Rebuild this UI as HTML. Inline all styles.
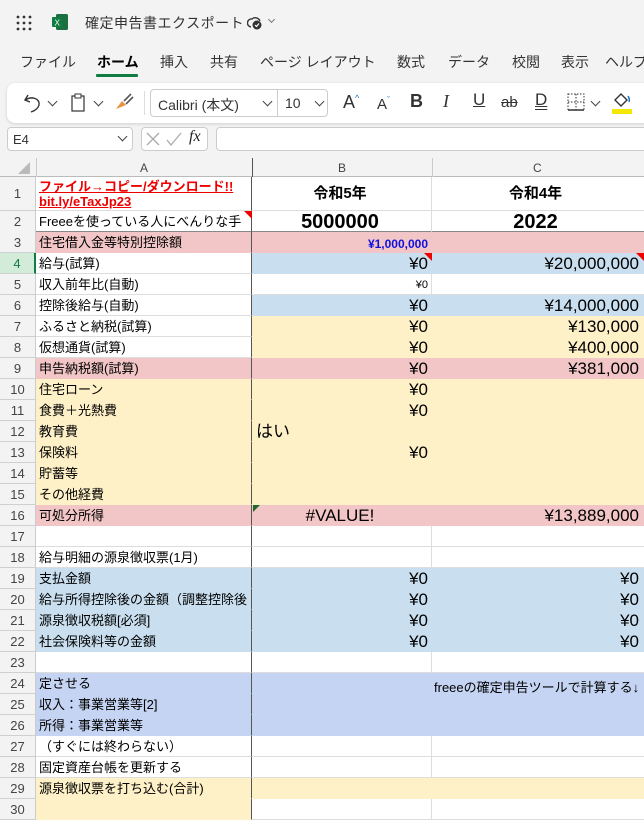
<!DOCTYPE html>
<html><head><meta charset="utf-8">
<style>
*{box-sizing:border-box;margin:0;padding:0}
body{width:644px;height:818px;overflow:hidden;background:#fff;font-family:"Liberation Sans","Noto Sans CJK JP",sans-serif;position:relative;color:#000}
.top{position:absolute;left:0;top:0;width:644px;height:158px;background:#f3f3f3}
.abs{position:absolute;white-space:nowrap}
.tab{position:absolute;top:52px;font-size:14px;color:#333;white-space:nowrap}
.card{position:absolute;left:7px;top:83px;width:650px;height:40px;background:#fff;border-radius:8px;box-shadow:0 1px 3px rgba(0,0,0,.15)}
.r{position:absolute;left:0;width:644px;height:21px}
.r div{position:absolute;top:0;height:100%;white-space:nowrap;overflow:hidden}
.n{left:0;width:36px;background:#f3f3f3;border-right:1px solid #ccc;border-bottom:1px solid #d0d0d0;text-align:center;font-size:13px;color:#444;line-height:21px}
.a{left:36px;width:216px;border-right:1px solid #555;border-bottom:1px solid #ddd;font-size:13px;line-height:22px;padding-left:3px}
.b{left:252px;width:180px;border-right:1px solid #ddd;border-bottom:1px solid #ddd;font-size:17px;line-height:22px;text-align:right;padding-right:3px}
.c{left:432px;width:212px;border-bottom:1px solid #ddd;font-size:17px;line-height:22px;text-align:right;padding-right:5px}
.pk{background:#f2c6c6!important;border-color:#f2c6c6!important}
.bl{background:#c9dff0!important;border-color:#c9dff0!important}
.ye{background:#fef0c7!important;border-color:#fef0c7!important}
.lv{background:#c5d4f2!important;border-color:#c5d4f2!important}
.a.pk,.a.bl,.a.ye,.a.lv{border-right-color:#555!important}
.tri{position:absolute;width:0;height:0;border-top:8px solid #e00;border-left:8px solid transparent}
.ch{position:absolute;width:7px;height:7px;border-right:1.3px solid #444;border-bottom:1.3px solid #444;transform:rotate(45deg)}
</style></head><body>
<div class="top"></div>
<svg class="abs" style="left:16px;top:15px" width="16" height="16"><g fill="#333"><circle cx="2" cy="2" r="1.4"/><circle cx="8" cy="2" r="1.4"/><circle cx="14" cy="2" r="1.4"/><circle cx="2" cy="8" r="1.4"/><circle cx="8" cy="8" r="1.4"/><circle cx="14" cy="8" r="1.4"/><circle cx="2" cy="14" r="1.4"/><circle cx="8" cy="14" r="1.4"/><circle cx="14" cy="14" r="1.4"/></g></svg>
<svg class="abs" style="left:52px;top:14px" width="16" height="16"><rect x="4" y="0" width="12" height="16" rx="1.5" fill="#1d6f42"/><rect x="0" y="3" width="10" height="10" rx="1" fill="#107c41"/><text x="2.5" y="11.5" font-size="8" fill="#fff" font-family="Liberation Sans">X</text></svg>
<div class="abs" style="left:85px;top:13px;font-size:14px;color:#333;letter-spacing:0.5px">確定申告書エクスポート</div>
<svg class="abs" style="left:247px;top:15px" width="16" height="16"><path d="M4 12 A4 4 0 0 1 5 4 A5 5 0 0 1 13 6" fill="none" stroke="#333" stroke-width="1.4"/><circle cx="10" cy="10" r="4.5" fill="#333"/><path d="M8 10 L9.5 11.5 L12 8.5" stroke="#fff" stroke-width="1.2" fill="none"/></svg>
<div class="ch" style="left:269px;top:17px;width:5px;height:5px;border-color:#777"></div>
<div class="tab" style="left:20px">ファイル</div>
<div class="tab" style="left:97px;font-weight:bold;color:#000">ホーム</div>
<div class="abs" style="left:96px;top:74px;width:42px;height:3px;background:#107c41;border-radius:1px"></div>
<div class="tab" style="left:160px">挿入</div>
<div class="tab" style="left:210px">共有</div>
<div class="tab" style="left:260px">ページ レイアウト</div>
<div class="tab" style="left:397px">数式</div>
<div class="tab" style="left:448px">データ</div>
<div class="tab" style="left:512px">校閲</div>
<div class="tab" style="left:561px">表示</div>
<div class="tab" style="left:605px">ヘルプ</div>
<div class="card"></div>
<svg class="abs" style="left:23px;top:92px" width="20" height="22"><path d="M5 3 L2 8 L7 10" fill="none" stroke="#333" stroke-width="1.4"/><path d="M2.5 8 C8 4 17 6 16 13 C15 17 11 19 8 20" fill="none" stroke="#333" stroke-width="1.4"/></svg>
<div class="ch" style="left:49px;top:98px"></div>
<svg class="abs" style="left:71px;top:93px" width="14" height="20"><rect x="1" y="3" width="12" height="15" fill="none" stroke="#333" stroke-width="1.2"/><rect x="4" y="1" width="6" height="4" fill="#fff" stroke="#333"/></svg>
<div class="ch" style="left:95px;top:98px"></div>
<svg class="abs" style="left:114px;top:92px" width="20" height="20"><path d="M2 17 L8 9 L12 13 Z" fill="#e8903a"/><path d="M10 9 L17 2 M12 12 L19 5" stroke="#555" stroke-width="1.6"/></svg>
<div class="abs" style="left:144px;top:91px;width:1px;height:24px;background:#ddd"></div>
<div class="abs" style="left:150px;top:89px;width:178px;height:28px;border:1px solid #ccc;border-radius:4px"></div>
<div class="abs" style="left:277px;top:89px;width:1px;height:28px;background:#ccc"></div>
<div class="abs" style="left:158px;top:95px;font-size:14px;color:#333">Calibri (本文)</div>
<div class="ch" style="left:264px;top:98px"></div>
<div class="abs" style="left:285px;top:95px;font-size:14px;color:#333">10</div>
<div class="ch" style="left:316px;top:98px"></div>
<div class="abs" style="left:343px;top:92px;font-size:18px;color:#333">A<sup style="font-size:9px;color:#1a73c8">^</sup></div>
<div class="abs" style="left:377px;top:95px;font-size:15px;color:#333">A<sup style="font-size:9px;color:#1a73c8">ˇ</sup></div>
<div class="abs" style="left:410px;top:91px;font-size:18px;font-weight:bold;color:#333">B</div>
<div class="abs" style="left:443px;top:91px;font-size:18px;font-style:italic;font-family:'Liberation Serif';color:#333">I</div>
<div class="abs" style="left:473px;top:90px;font-size:17px;text-decoration:underline;color:#333">U</div>
<div class="abs" style="left:501px;top:94px;font-size:15px;text-decoration:line-through;color:#333">ab</div>
<div class="abs" style="left:535px;top:90px;font-size:17px;text-decoration:underline double;color:#333">D</div>
<svg class="abs" style="left:567px;top:93px" width="18" height="18"><rect x="1" y="1" width="16" height="16" fill="none" stroke="#333" stroke-dasharray="1.5 1.5"/><path d="M9 1V17M1 9H17" stroke="#333" stroke-dasharray="1.5 1.5"/><path d="M1 17H17" stroke="#333" stroke-width="1.5"/></svg>
<div class="ch" style="left:592px;top:98px"></div>
<svg class="abs" style="left:611px;top:89px" width="24" height="26"><path d="M4 11 L10 5 L16 11 L10 17 Z" fill="none" stroke="#333" stroke-width="1.4"/><path d="M17 7 Q19 10 18 13" fill="none" stroke="#1a73c8" stroke-width="1.5"/><rect x="1" y="20" width="20" height="5" fill="#f5e700"/></svg>
<div class="abs" style="left:7px;top:127px;width:126px;height:24px;background:#fff;border:1px solid #ccc;border-radius:4px;font-size:13px;padding:4px 5px;color:#333">E4</div>
<div class="ch" style="left:119px;top:133px"></div>
<div class="abs" style="left:141px;top:127px;width:67px;height:24px;background:#fff;border:1px solid #ccc;border-radius:4px"></div>
<svg class="abs" style="left:146px;top:132px" width="38" height="15"><path d="M1 1L13 13M13 1L1 13" stroke="#aaa" stroke-width="1.3"/><path d="M21 8L25 13L35 1" stroke="#aaa" stroke-width="1.3" fill="none"/></svg>
<div class="abs" style="left:189px;top:128px;font-size:16px;font-style:italic;font-family:'Liberation Serif';color:#222">fx</div>
<div class="abs" style="left:216px;top:127px;width:440px;height:24px;background:#fff;border:1px solid #ccc;border-radius:4px"></div>
<div class="abs" style="left:0;top:158px;width:644px;height:19px;background:#f3f3f3;border-bottom:1px solid #bbb"></div>
<svg class="abs" style="left:18px;top:162px" width="12" height="12"><path d="M12 0V12H0Z" fill="#bbb"/></svg>
<div class="abs" style="left:36px;top:158px;width:1px;height:19px;background:#ccc"></div>
<div class="abs" style="left:140px;top:161px;font-size:12px;color:#444">A</div>
<div class="abs" style="left:252px;top:158px;width:1px;height:19px;background:#555"></div>
<div class="abs" style="left:338px;top:161px;font-size:12px;color:#444">B</div>
<div class="abs" style="left:432px;top:158px;width:1px;height:19px;background:#ccc"></div>
<div class="abs" style="left:533px;top:161px;font-size:12px;color:#444">C</div>
<div class="r" style="top:177px;height:34px"><div class="n" style="line-height:34px">1</div><div class="a" style="color:#e00;font-weight:bold;text-decoration:underline;font-size:13px;line-height:15px;padding-top:2px">ファイル→コピー/ダウンロード!!<br>bit.ly/eTaxJp23</div><div class="b" style="text-align:center;font-weight:bold;font-size:15px;line-height:34px">令和5年</div><div class="c" style="text-align:center;font-weight:bold;font-size:15px;line-height:34px">令和4年</div></div>
<div class="r" style="top:211px;height:22px"><div class="n">2</div><div class="a" style="font-size:13px;border-bottom:2px solid #888">Freeeを使っている人にべんりな手</div><div class="b" style="text-align:center;font-weight:bold;font-size:20px;border-bottom:2px solid #888">5000000</div><div class="c" style="text-align:center;font-weight:bold;font-size:20px;border-bottom:2px solid #888">2022</div></div>
<div class="tri" style="left:244px;top:211px"></div>
<div class="r" style="top:232px"><div class="n">3</div><div class="a pk">住宅借入金等特別控除額</div><div class="b pk" style="font-size:12px;color:#1010e0;font-weight:bold;line-height:24px">¥1,000,000</div><div class="c pk"></div></div>
<div class="r" style="top:253px"><div class="n" style="background:#d3ebd9;border-right:2px solid #107c41;color:#107c41">4</div><div class="a">給与(試算)</div><div class="b bl">¥0</div><div class="c bl">¥20,000,000</div></div>
<div class="tri" style="left:424px;top:253px"></div><div class="tri" style="left:636px;top:253px"></div>
<div class="r" style="top:274px"><div class="n">5</div><div class="a">収入前年比(自動)</div><div class="b" style="font-size:11px">¥0</div><div class="c"></div></div>
<div class="r" style="top:295px"><div class="n">6</div><div class="a">控除後給与(自動)</div><div class="b bl">¥0</div><div class="c bl">¥14,000,000</div></div>
<div class="r" style="top:316px"><div class="n">7</div><div class="a">ふるさと納税(試算)</div><div class="b ye">¥0</div><div class="c ye">¥130,000</div></div>
<div class="r" style="top:337px"><div class="n">8</div><div class="a">仮想通貨(試算)</div><div class="b ye">¥0</div><div class="c ye">¥400,000</div></div>
<div class="r" style="top:358px"><div class="n">9</div><div class="a pk">申告納税額(試算)</div><div class="b pk">¥0</div><div class="c pk">¥381,000</div></div>
<div class="r" style="top:379px"><div class="n">10</div><div class="a ye">住宅ローン</div><div class="b ye">¥0</div><div class="c ye"></div></div>
<div class="r" style="top:400px"><div class="n">11</div><div class="a ye">食費＋光熱費</div><div class="b ye">¥0</div><div class="c ye"></div></div>
<div class="r" style="top:421px"><div class="n">12</div><div class="a ye">教育費</div><div class="b ye" style="text-align:left;padding-left:4px;font-size:17px">はい</div><div class="c ye"></div></div>
<div class="r" style="top:442px"><div class="n">13</div><div class="a ye">保険料</div><div class="b ye">¥0</div><div class="c ye"></div></div>
<div class="r" style="top:463px"><div class="n">14</div><div class="a ye">貯蓄等</div><div class="b ye"></div><div class="c ye"></div></div>
<div class="r" style="top:484px"><div class="n">15</div><div class="a ye">その他経費</div><div class="b ye"></div><div class="c ye"></div></div>
<div class="r" style="top:505px"><div class="n">16</div><div class="a pk">可処分所得</div><div class="b pk" style="text-align:center">#VALUE!</div><div class="c pk">¥13,889,000</div></div>
<div class="abs" style="left:253px;top:505px;width:0;height:0;border-top:7px solid #1d6b2a;border-right:7px solid transparent"></div>
<div class="r" style="top:526px"><div class="n">17</div><div class="a"></div><div class="b"></div><div class="c"></div></div>
<div class="r" style="top:547px"><div class="n">18</div><div class="a">給与明細の源泉徴収票(1月)</div><div class="b"></div><div class="c"></div></div>
<div class="r" style="top:568px"><div class="n">19</div><div class="a bl">支払金額</div><div class="b bl">¥0</div><div class="c bl">¥0</div></div>
<div class="r" style="top:589px"><div class="n">20</div><div class="a bl">給与所得控除後の金額（調整控除後</div><div class="b bl">¥0</div><div class="c bl">¥0</div></div>
<div class="r" style="top:610px"><div class="n">21</div><div class="a bl">源泉徴収税額[必須]</div><div class="b bl">¥0</div><div class="c bl">¥0</div></div>
<div class="r" style="top:631px"><div class="n">22</div><div class="a bl">社会保険料等の金額</div><div class="b bl">¥0</div><div class="c bl">¥0</div></div>
<div class="r" style="top:652px"><div class="n">23</div><div class="a"></div><div class="b"></div><div class="c"></div></div>
<div class="r" style="top:673px"><div class="n">24</div><div class="a lv">定させる</div><div class="b lv"></div><div class="c lv"></div></div>
<div class="abs" style="left:434px;top:677px;font-size:13px">freeeの確定申告ツールで計算する↓</div>
<div class="r" style="top:694px"><div class="n">25</div><div class="a lv">収入：事業営業等[2]</div><div class="b lv"></div><div class="c lv"></div></div>
<div class="r" style="top:715px"><div class="n">26</div><div class="a lv">所得：事業営業等</div><div class="b lv"></div><div class="c lv"></div></div>
<div class="r" style="top:736px"><div class="n">27</div><div class="a">（すぐには終わらない）</div><div class="b"></div><div class="c"></div></div>
<div class="r" style="top:757px"><div class="n">28</div><div class="a">固定資産台帳を更新する</div><div class="b"></div><div class="c"></div></div>
<div class="r" style="top:778px"><div class="n">29</div><div class="a ye">源泉徴収票を打ち込む(合計)</div><div class="b ye"></div><div class="c ye"></div></div>
<div class="r" style="top:799px"><div class="n">30</div><div class="a ye"></div><div class="b"></div><div class="c"></div></div>
</body></html>
